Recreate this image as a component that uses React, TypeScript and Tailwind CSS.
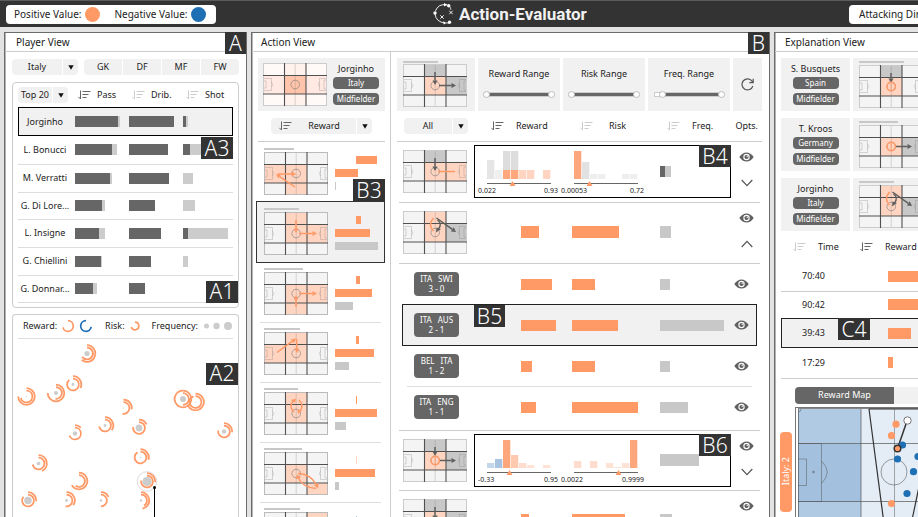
import React from "react";

const ORANGE = "#ff9966";
const PEACH = "#ffd5c2";
const GREY = "#c8c8c8";

type Tone = "o" | "g";

function Badge({ children, className = "" }: { children: string; className?: string }) {
  return (
    <span
      className={`absolute z-10 flex h-[22px] items-center justify-center bg-[#333] text-[21px] leading-none font-light text-white ${className}`}
    >
      {children}
    </span>
  );
}

function SortIcon({ active = false }: { active?: boolean }) {
  return (
    <svg width="13" height="10" viewBox="0 0 13 10" fill="none" stroke={active ? "#666" : "#ccc"} className="shrink-0">
      <path d="M2.5 0.5V9M0.3 6.8L2.5 9M4.5 1.5H12.5M4.5 4.5H10.5M4.5 7.5H8.5" />
    </svg>
  );
}

function Picker({ label, value, className = "", sort = false }: { label: string; value: string; className?: string; sort?: boolean }) {
  return (
    <div className={`relative flex h-4 rounded bg-[#f1f1f1] ${className}`}>
      {sort && (
        <span className="flex items-center pl-2">
          <SortIcon active />
        </span>
      )}
      <select
        aria-label={label}
        className="min-w-0 flex-1 appearance-none bg-transparent pr-4 text-center text-[9px] leading-4 font-normal text-[#222] [text-align-last:center]"
      >
        <option>{value}</option>
      </select>
      <span className="pointer-events-none absolute inset-y-0 right-0 flex w-4 items-center justify-center border-l border-white">
        <svg width="6" height="5" viewBox="0 0 6 5">
          <path d="M0.3 0.3H5.7L3 4.8Z" fill="#111" />
        </svg>
      </span>
    </div>
  );
}

function SortLabel({ children, active = false, className = "" }: { children: string; active?: boolean; className?: string }) {
  return (
    <button type="button" className={`flex items-center font-normal ${className}`}>
      <SortIcon active={active} />
      <span>{children}</span>
    </button>
  );
}

function Arrow({ x1, y1, x2, y2, tone = "o", head = true }: { x1: number; y1: number; x2: number; y2: number; tone?: Tone; head?: boolean }) {
  const color = tone === "o" ? ORANGE : "#5f5f5f";
  const a = Math.atan2(y2 - y1, x2 - x1);
  const bx = x2 - 4.5 * Math.cos(a);
  const by = y2 - 4.5 * Math.sin(a);
  const px = -Math.sin(a) * 2.5;
  const py = Math.cos(a) * 2.5;
  return (
    <g>
      <line x1={x1} y1={y1} x2={head ? bx : x2} y2={head ? by : y2} stroke={color} strokeWidth="1.5" />
      {head && <polygon points={`${x2},${y2} ${bx + px},${by + py} ${bx - px},${by - py}`} fill={color} />}
    </g>
  );
}

/* A football pitch split into nine zones; `zones` maps a zone index (0-8) to its fill. */
function Pitch({ zones, framed = false, children }: { zones: Record<number, string>; framed?: boolean; children?: React.ReactNode }) {
  const xs = [0, 21.5, 43, 64];
  const ys = [0, 12.5, 31, 43];
  return (
    <svg width="64" height="43" viewBox="0 0 64 43" fill="none" className="shrink-0">
      <rect width="64" height="43" fill="#f4f4f4" />
      {Object.entries(zones).map(([k, fill]) => {
        const i = Number(k);
        const c = i % 3;
        const r = Math.floor(i / 3);
        return <rect key={k} x={xs[c]} y={ys[r]} width={xs[c + 1] - xs[c]} height={ys[r + 1] - ys[r]} fill={fill} />;
      })}
      <g stroke="#777" strokeOpacity="0.35" strokeWidth="0.8">
        <path d="M32.2 0V43" />
        <path d="M0 15.5H8.5V27.5H0M0 18H3V25H0M8.5 19Q11 21.5 8.5 24" />
        <path d="M64 15.5H56.5V27.5H64M64 17H61V26H64M56.5 19Q54 21.5 56.5 24" />
      </g>
      <circle cx="32.2" cy="21.5" r="4.3" stroke="#777" strokeOpacity="0.75" strokeWidth="0.8" />
      <rect x="0.5" y="0.5" width="63" height="42" stroke={framed ? "#bbb" : "#ccc"} />
      <path d="M21.5 0V43M43 0V43M0 12.5H64M0 31H64" stroke="#505050" strokeWidth="1.1" />
      {children}
    </svg>
  );
}

function Caption({ w }: { w: number }) {
  return <div className="h-[2px] bg-[#c8c8c8]" style={{ width: w }} />;
}

function Pill({ children }: { children: string }) {
  return (
    <span className="block h-3 w-[46px] rounded bg-[#666] text-center text-[8px] leading-3 text-white">{children}</span>
  );
}

function PersonTag({ name, team }: { name: string; team: string }) {
  return (
    <div className="flex flex-col items-center">
      <span className="h-4 text-[9px] leading-4 whitespace-nowrap text-[#222]">{name}</span>
      <div className="flex flex-col gap-1">
        <Pill>{team}</Pill>
        <Pill>Midfielder</Pill>
      </div>
    </div>
  );
}

function EyeButton() {
  return (
    <button type="button" aria-label="Show" className="block">
      <svg width="15" height="10" viewBox="0 0 15 10">
        <path d="M0.3 5Q3.4 0.5 7.5 0.5T14.7 5Q11.6 9.5 7.5 9.5T0.3 5Z" fill="#606060" />
        <circle cx="7.5" cy="5" r="3.2" fill="#fff" />
        <circle cx="7.5" cy="5" r="2.1" fill="#606060" />
        <circle cx="8.2" cy="4.3" r="0.7" fill="#fff" />
      </svg>
    </button>
  );
}

function ChevronButton({ up = false }: { up?: boolean }) {
  return (
    <button type="button" aria-label={up ? "Collapse" : "Expand"} className="block">
      <svg width="12" height="8" viewBox="0 0 12 8" fill="none" stroke="#555" strokeWidth="1.2">
        <path d={up ? "M0.7 7L6 1.4L11.3 7" : "M0.7 1L6 6.6L11.3 1"} />
      </svg>
    </button>
  );
}

/* ------------------------------ Player view ------------------------------ */

const players: { name: string; pass: number[]; drib: number[]; shot: number[] }[] = [
  { name: "Jorginho", pass: [43, 2], drib: [45, 0], shot: [3, 2] },
  { name: "L. Bonucci", pass: [37, 5], drib: [39, 0], shot: [7, 13] },
  { name: "M. Verratti", pass: [35, 2], drib: [40, 0], shot: [0, 10] },
  { name: "G. Di Lore...", pass: [27, 3], drib: [26, 0], shot: [0, 12] },
  { name: "L. Insigne", pass: [24, 6], drib: [32, 0], shot: [5, 40] },
  { name: "G. Chiellini", pass: [26, 1], drib: [22, 0], shot: [0, 5] },
  { name: "G. Donnar...", pass: [18, 4], drib: [16, 0], shot: [0, 0] },
];

function SplitBar({ v }: { v: number[] }) {
  return (
    <div className="flex h-[11px]">
      <div className="bg-[#666]" style={{ width: v[0] }} />
      <div className="bg-[#ccc]" style={{ width: v[1] }} />
    </div>
  );
}

function arc(cx: number, cy: number, r: number, from: number, to: number) {
  const p = (d: number) => {
    const t = ((d - 90) * Math.PI) / 180;
    return `${(cx + r * Math.cos(t)).toFixed(2)} ${(cy + r * Math.sin(t)).toFixed(2)}`;
  };
  return `M${p(from)}A${r} ${r} 0 ${to - from > 180 ? 1 : 0} 1 ${p(to)}`;
}

/* x, y, frequency radius, reward sweep, risk sweep */
const glyphs: number[][] = [
  [87, 353.5, 2.6, 220, 235],
  [26.5, 396.5, 0.6, 270, 255],
  [56, 393, 2, 270, 185],
  [73, 384.5, 1.4, 115, 320],
  [123.5, 408, 0.6, 100, 190],
  [105, 425.5, 1.4, 125, 260],
  [139, 428, 3.4, 65, 280],
  [75, 433.5, 2.2, 45, 250],
  [183, 399, 3, 359, 180],
  [195.5, 402, 0.6, 240, 340],
  [224, 431.5, 2.2, 95, 280],
  [38.5, 463.5, 1.8, 155, 260],
  [140.5, 457.5, 0.7, 105, 330],
  [79, 481, 0.4, 240, 215],
  [147, 481.5, 4.6, 95, 280],
  [28, 500.5, 3.8, 95, 310],
  [66.5, 500.5, 1.4, 125, 190],
  [101, 500.5, 1.2, 65, 180],
  [141, 500.5, 1.2, 170, 150],
];

function PlayerView() {
  return (
    <section className="relative flex w-[243px] shrink-0 flex-col border border-b-0 border-[#6b6b6b] bg-white shadow-[inset_1px_0_0_#b5b5b5]">
      <Badge className="-top-px right-0 w-[21px]">A</Badge>
      <h2 className="h-[19px] shrink-0 border-b border-[#ccc] pl-[11px] text-[10px] leading-[19px]">Player View</h2>
      <div className="flex flex-1 flex-col px-[7px] pt-[7px]">
        <div className="flex gap-[6px]">
          <Picker label="Team" value="Italy" className="w-[66px]" />
          <div className="grid h-4 flex-1 grid-cols-4 gap-px overflow-hidden rounded">
            {["GK", "DF", "MF", "FW"].map((p) => (
              <button key={p} type="button" className="bg-[#f1f1f1] text-[9px] leading-4">
                {p}
              </button>
            ))}
          </div>
        </div>

        <div className="relative mt-[7px] rounded border border-[#ccc] px-[5px] pt-1 pb-1">
          <Badge className="top-[54px] right-[5px] w-8">A3</Badge>
          <Badge className="right-0 bottom-[4px] w-8">A1</Badge>
          <table className="w-full table-fixed border-collapse text-[9px] leading-4">
            <colgroup>
              <col className="w-[57px]" />
              <col className="w-[54px]" />
              <col className="w-[54px]" />
              <col />
            </colgroup>
            <thead>
              <tr className="h-5 align-top">
                <th className="p-0">
                  <Picker label="Number of players" value="Top 20" className="w-[50px]" />
                </th>
                <th className="p-0 pl-[3px]">
                  <SortLabel active className="gap-[6px]">Pass</SortLabel>
                </th>
                <th className="p-0 pl-[3px]">
                  <SortLabel className="gap-[6px]">Drib.</SortLabel>
                </th>
                <th className="p-0 pl-[3px]">
                  <SortLabel className="gap-[6px]">Shot</SortLabel>
                </th>
              </tr>
            </thead>
            <tbody>
              {players.map((p, i) => (
                <tr
                  key={p.name}
                  className={
                    i === 0
                      ? "h-[29px] bg-[#f1f1f1] outline outline-1 -outline-offset-1 outline-black"
                      : i % 3 === 0
                        ? "h-[27px] border-b border-[#ddd]"
                        : "h-[28px] border-b border-[#ddd]"
                  }
                >
                  <td className="p-0 pr-[3px] text-center text-[9px] whitespace-nowrap">{p.name}</td>
                  <td className="p-0">
                    <SplitBar v={p.pass} />
                  </td>
                  <td className="p-0">
                    <SplitBar v={p.drib} />
                  </td>
                  <td className="p-0">
                    <SplitBar v={p.shot} />
                  </td>
                </tr>
              ))}
            </tbody>
          </table>
        </div>

        <div className="relative mt-[6px] flex-1 rounded-t border border-b-0 border-[#ccc] px-[5px]">
          <Badge className="top-[48px] right-0 w-8">A2</Badge>
          <div className="flex h-6 items-center border-b border-[#ddd] pl-[5px] text-[9px]">
            <span>Reward:</span>
            <svg width="32" height="14" viewBox="0 0 32 14" fill="none" strokeWidth="1.7" className="ml-[4px] shrink-0">
              <path d={arc(7, 7, 5.3, 0, 255)} stroke={ORANGE} />
              <path d={arc(25, 7, 5.3, 100, 360)} stroke="#1f6fb5" />
            </svg>
            <span className="ml-3">Risk:</span>
            <svg width="10" height="12" viewBox="0 0 10 12" fill="none" strokeWidth="1.7" className="ml-[5px] shrink-0">
              <path d={arc(5, 6, 3.8, 0, 255)} stroke={ORANGE} />
            </svg>
            <span className="ml-3">Frequency:</span>
            <svg width="30" height="10" viewBox="0 0 30 10" fill="#ccc" className="ml-[5px] shrink-0">
              <circle cx="3.5" cy="5" r="2.5" />
              <circle cx="13.5" cy="5" r="3.2" />
              <circle cx="25" cy="5" r="4" />
            </svg>
          </div>
          <svg height="178" className="w-full overflow-visible" fill="none">
            <g transform="translate(-18 -339)" stroke={ORANGE} strokeWidth="1.8">
              <circle cx="147" cy="481.5" r="9.8" stroke="#ddd" strokeWidth="1" />
              {glyphs.map(([x, y, f, rew, risk], i) => (
                <g key={i}>
                  <circle cx={x} cy={y} r={f} fill="#ccc" stroke="none" />
                  <path d={arc(x, y, 8.3, 0, rew)} />
                  <path d={arc(x, y, 5.9, 0, risk)} />
                </g>
              ))}
              <circle cx="154.5" cy="487.5" r="1.5" fill="#000" stroke="none" />
              <path d="M154.5 487.5V520" stroke="#000" strokeWidth="1" />
            </g>
          </svg>
        </div>
      </div>
    </section>
  );
}

/* ------------------------------ Action view ------------------------------ */

const actions: {
  cap: number;
  zones: Record<number, string>;
  art: React.ReactNode;
  reward: number;
  tone: string;
  risk: number;
  freq: number;
}[] = [
  {
    cap: 30,
    zones: { 3: PEACH, 4: PEACH, 7: PEACH },
    art: (
      <>
        <Arrow x1={14} y1={22} x2={32} y2={22} />
        <Arrow x1={31} y1={35} x2={12} y2={22} />
      </>
    ),
    reward: 21,
    tone: ORANGE,
    risk: 23,
    freq: 1,
  },
  {
    cap: 35,
    zones: { 1: PEACH, 4: PEACH, 5: PEACH },
    art: (
      <>
        <Arrow x1={32} y1={8} x2={32} y2={21} />
        <Arrow x1={35} y1={21.5} x2={53} y2={21.5} />
      </>
    ),
    reward: 5,
    tone: ORANGE,
    risk: 35,
    freq: 43,
  },
  {
    cap: 39,
    zones: { 4: PEACH, 5: PEACH, 7: PEACH },
    art: (
      <>
        <Arrow x1={32} y1={35} x2={32} y2={23} />
        <Arrow x1={35} y1={21.5} x2={53} y2={21.5} />
      </>
    ),
    reward: 4,
    tone: ORANGE,
    risk: 37,
    freq: 18,
  },
  {
    cap: 36,
    zones: { 1: PEACH, 3: PEACH, 4: PEACH },
    art: (
      <>
        <Arrow x1={13} y1={20.5} x2={32} y2={6.5} />
        <Arrow x1={32.5} y1={7} x2={33} y2={21} />
      </>
    ),
    reward: 3,
    tone: ORANGE,
    risk: 39,
    freq: 14,
  },
  {
    cap: 34,
    zones: { 1: PEACH, 4: PEACH },
    art: (
      <>
        <g stroke={ORANGE} strokeWidth="1.4">
          <path d="M30 20Q24.5 15 29 9M35 8Q40.500 13 36 19" />
        </g>
        <path d="M27 8L32 6.500L31 11Z M33.500 17.500L38 18.500L34 22Z" fill={ORANGE} />
      </>
    ),
    reward: 1,
    tone: ORANGE,
    risk: 42,
    freq: 11,
  },
  {
    cap: 38,
    zones: { 4: PEACH, 8: PEACH },
    art: (
      <>
        <g stroke={ORANGE} strokeWidth="1.4">
          <path d="M34 21.500Q46 22 52 32M52 36.500Q38 35 34.500 26" />
        </g>
        <path d="M50 33L54.500 31L54 36.500Z M32 27L33 22.500L37 26Z" fill={ORANGE} />
      </>
    ),
    reward: 1,
    tone: "#ffd5c2",
    risk: 40,
    freq: 4,
  },
  { cap: 36, zones: { 2: PEACH }, art: null, reward: 1, tone: "#a9c4e0", risk: 40, freq: 4 },
];

function ActionList() {
  return (
    <div className="relative w-[139px] shrink-0 border-r border-[#ccc] pt-[6px] pr-[5px] pl-[6px]">
      <Badge className="top-[127px] right-[5px] w-8">B3</Badge>
      <div className="flex h-[53px] justify-between bg-[#f1f1f1] pr-[6px] pl-[5px]">
        <div className="pt-[5px]">
          <Pitch
            zones={{
              0: "#fffaf8",
              1: "#fff1ec",
              2: "#fffaf8",
              3: "#ffe9e2",
              4: "#ffc4a9",
              5: "#ffe9e2",
              6: "#fffaf8",
              7: "#fff1ec",
              8: "#fffaf8",
            }}
          />
        </div>
        <div className="pt-[3px]">
          <PersonTag name="Jorginho" team="Italy" />
        </div>
      </div>
      <div className="mt-[7px] border-b border-[#ccc] px-[13px] pb-[7px]">
        <Picker label="Sort actions by" value="Reward" sort />
      </div>
      <ul className="mt-px mr-1 ml-[2px]">
        {actions.map((a, i) => (
          <li
            key={i}
            className={
              i === 1
                ? "-mx-1 -mt-[2px] flex h-[62px] border border-[#333] bg-[#f1f1f1] pt-[6px] pl-[7px]"
                : "flex h-[60px] border-b border-[#ddd] pt-[5px] pl-1"
            }
          >
            <div className="flex flex-col gap-[2px]">
              <Caption w={a.cap} />
              <Pitch zones={a.zones} framed>
                {a.art}
              </Pitch>
            </div>
            <div className="ml-[7px] flex flex-col gap-[5px] pt-2">
              <div className="ml-[21px] h-2" style={{ width: a.reward, background: a.tone }} />
              <div className="h-2 bg-[#ff9966]" style={{ width: a.risk }} />
              <div className="h-2 bg-[#c8c8c8]" style={{ width: a.freq }} />
            </div>
          </li>
        ))}
      </ul>
    </div>
  );
}

function RangeFilter({ label, low = 0 }: { label: string; low?: number }) {
  const thumb =
    "pointer-events-none absolute inset-0 h-full w-full appearance-none bg-transparent [&::-webkit-slider-thumb]:pointer-events-auto [&::-webkit-slider-thumb]:h-[7px] [&::-webkit-slider-thumb]:w-[7px] [&::-webkit-slider-thumb]:appearance-none [&::-webkit-slider-thumb]:rounded-full [&::-webkit-slider-thumb]:border [&::-webkit-slider-thumb]:border-[#bbb] [&::-webkit-slider-thumb]:bg-white";
  return (
    <div role="group" aria-label={label} className="min-w-0 bg-[#f1f1f1] px-[5px] pt-2">
      <div className="text-center text-[9px] leading-4 whitespace-nowrap">{label}</div>
      <div className="relative mt-[9px] h-[7px]">
        <div className="absolute inset-x-[2px] top-[2px] h-[3px] bg-white outline outline-1 outline-[#ccc]" />
        <div className="absolute top-[2px] right-[3px] h-[3px] bg-[#666]" style={{ left: `${low + 4}%` }} />
        <input type="range" aria-label={`${label} minimum`} defaultValue={low} className={thumb} />
        <input type="range" aria-label={`${label} maximum`} defaultValue={100} className={thumb} />
      </div>
    </div>
  );
}

type Bin = [number, string] | [number, string, number, string];

function Histogram({ bins, inset, mark, low, high, className }: { bins: Bin[]; inset: number; mark: number; low: string; high: string; className: string }) {
  return (
    <div className={`shrink-0 ${className}`}>
      <svg width="80" height="40" viewBox="0 0 80 40" className="block">
        {bins.map((b, i) => (
          <g key={i}>
            <rect x={inset + i * 8} y={33 - b[0]} width="7.300" height={b[0]} fill={b[1]} />
            {b.length === 4 && <rect x={inset + i * 8} y={33 - b[0] - b[2]} width="7.300" height={b[2]} fill={b[3]} />}
          </g>
        ))}
        <path d={`M${inset} 37.500H${inset + 64}`} stroke="#666" />
        <path d={`M${mark - 3} 40L${mark} 35L${mark + 3} 40Z`} fill={ORANGE} />
      </svg>
      <div className="flex justify-between text-[7px] leading-[9px]">
        <span>{low}</span>
        <span>{high}</span>
      </div>
    </div>
  );
}

function Bars({ v }: { v: number[] }) {
  return (
    <>
      <div className="h-full bg-[#ff9966]" style={{ width: v[0] }} />
      <div className="h-full bg-[#ff9966]" style={{ width: v[1] }} />
      <div className="h-full bg-[#c8c8c8]" style={{ width: v[2] }} />
    </>
  );
}

function PatternRow({ zones, art, up = false, className = "", children }: { zones: Record<number, string>; art: React.ReactNode; up?: boolean; className?: string; children: React.ReactNode }) {
  return (
    <div className={`mx-[2px] flex border-b border-[#ccc] pl-1 ${className}`}>
      <div className="pt-2">
        <Pitch zones={zones}>{art}</Pitch>
      </div>
      <div className="ml-[7px] min-w-0 flex-1">{children}</div>
      <div className="ml-[2px] flex w-[27px] flex-col items-center gap-[17px] pt-[10px]">
        <EyeButton />
        <ChevronButton up={up} />
      </div>
    </div>
  );
}

function GameRow({ teams, score, v, active = false }: { teams: [string, string]; score: string; v: number[]; active?: boolean }) {
  return (
    <div
      className={
        active
          ? "mx-[5px] flex h-[42px] items-center border border-[#222] bg-[#f1f1f1] pr-[7px] pl-[11px]"
          : "mx-[5px] flex h-10 items-center pr-2 pl-3"
      }
    >
      <div className="w-[45px] rounded bg-[#666] py-[2px] text-center text-[8px] leading-[10px] text-white">
        <div className="flex justify-center gap-[6px]">
          <span>{teams[0]}</span>
          <span>{teams[1]}</span>
        </div>
        <div>{score}</div>
      </div>
      <div className="ml-[62px] grid h-[11px] flex-1 grid-cols-[51px_88px_1fr]">
        <Bars v={v} />
      </div>
      <EyeButton />
    </div>
  );
}

const filterArt = (
  <>
    <Arrow x1={32} y1={8} x2={32} y2={21} tone="g" />
    <Arrow x1={36} y1={21.5} x2={53} y2={21.5} tone="g" />
  </>
);

const loopArt = (
  <>
    <path d="M30.500 20Q24.500 14 30.500 7" stroke={ORANGE} strokeWidth="1.5" />
    <path d="M34.500 9Q39.500 13 35.500 18" stroke="#5f5f5f" strokeWidth="1.4" />
    <path d="M33.500 16.500L38 18L33 21.500Z" fill="#5f5f5f" />
    <Arrow x1={33.5} y1={7} x2={53} y2={21} tone="g" />
  </>
);

const spinArt = (
  <>
    <circle cx="32.200" cy="21.500" r="4.200" stroke={ORANGE} strokeWidth="1.400" />
    <path d="M32.200 18V25" stroke={ORANGE} strokeWidth="0.800" />
  </>
);

function ActionDetail() {
  return (
    <div className="min-w-0 flex-1 pt-[6px] pr-[7px] pl-[6px]">
      <div className="grid h-[53px] grid-cols-[78px_1fr_1fr_1fr_29px] gap-[3px]">
        <div className="flex flex-col gap-px bg-[#f1f1f1] pt-[3px] pl-[6px]">
          <Caption w={35} />
          <Pitch zones={{ 1: GREY, 4: PEACH, 5: GREY }}>{filterArt}</Pitch>
        </div>
        <RangeFilter label="Reward Range" />
        <RangeFilter label="Risk Range" />
        <RangeFilter label="Freq. Range" low={9} />
        <button type="button" aria-label="Reset" className="flex items-center justify-center bg-[#f1f1f1]">
          <svg width="13" height="13" viewBox="0 0 13 13" fill="none" stroke="#555" strokeWidth="1.2">
            <path d="M11.800 8A5.500 5.500 0 1 1 11 3.200L12 4.500M12.200 0.800V4.700H8.300" />
          </svg>
        </button>
      </div>

      <div className="mt-[7px] grid h-6 grid-cols-[87px_89px_87px_1fr_auto] items-start border-b border-[#ccc] pr-1 pl-[7px] text-[9px] leading-4">
        <Picker label="Games" value="All" className="w-16" />
        <SortLabel active className="gap-3">Reward</SortLabel>
        <SortLabel className="gap-4">Risk</SortLabel>
        <SortLabel className="gap-3">Freq.</SortLabel>
        <span>Opts.</span>
      </div>

      <PatternRow
        className="h-[61px]"
        zones={{ 1: GREY, 4: PEACH, 5: PEACH }}
        art={
          <>
            <Arrow x1={32} y1={8} x2={32} y2={21} tone="g" />
            <Arrow x1={35} y1={21.5} x2={52} y2={21.5} head={false} />
          </>
        }
      >
        <div className="relative mt-[3px] flex h-[53px] border border-black pl-[3px]">
          <Badge className="-top-px -right-px w-8">B4</Badge>
          <div className="w-[83px]">
            <Histogram
              className="w-[80px]"
              inset={9}
              mark={34.5}
              low="0.022"
              high="0.93"
              bins={[
                [19, "#e5e5e5"],
                [9, "#efefef"],
                [9, "#ffa77c", 19, "#ddd"],
                [9, "#ffa77c", 19, "#ddd"],
                [9, PEACH],
                [9, PEACH],
                [0, PEACH],
                [9, PEACH],
              ]}
            />
          </div>
          <div className="w-[99px]">
            <Histogram
              className="w-[83px]"
              inset={13}
              mark={28.5}
              low="0.00053"
              high="0.72"
              bins={[
                [28, "#ffa77c"],
                [17, "#e2e2e2"],
                [5, "#eee"],
                [5, "#eee"],
                [0, "#eee"],
                [0, "#eee"],
                [5, "#eee"],
                [5, "#eee"],
              ]}
            />
          </div>
          <div className="mt-5 flex h-[11px]">
            <div className="w-[5px] bg-[#666]" />
            <div className="w-[6px] bg-[#c8c8c8]" />
          </div>
        </div>
      </PatternRow>

      <PatternRow className="h-[61px]" up zones={{ 1: PEACH, 4: PEACH, 5: GREY }} art={loopArt}>
        <div className="mt-[23px] grid h-3 grid-cols-[51px_88px_1fr] pl-[47px]">
          <Bars v={[18, 47, 11]} />
        </div>
      </PatternRow>

      <GameRow teams={["ITA", "SWI"]} score="3 - 0" v={[31, 23, 10]} />
      <div className="relative">
        <Badge className="top-px left-[77px] w-[31px]">B5</Badge>
        <GameRow active teams={["ITA", "AUS"]} score="2 - 1" v={[35, 46, 64]} />
      </div>
      <GameRow teams={["BEL", "ITA"]} score="1 - 2" v={[11, 23, 10]} />
      <div className="mx-[10px] h-px bg-[#ddd]" />
      <GameRow teams={["ITA", "ENG"]} score="1 - 1" v={[15, 66, 28]} />
      <div className="mx-[2px] h-1 border-b border-[#ccc]" />

      <PatternRow
        className="h-[60px]"
        zones={{ 1: GREY, 4: PEACH, 5: GREY }}
        art={
          <>
            <Arrow x1={32} y1={8} x2={32} y2={17} tone="g" />
            {spinArt}
            <Arrow x1={37} y1={21.5} x2={53} y2={21.5} tone="g" />
          </>
        }
      >
        <div className="relative mt-[3px] flex h-[53px] border border-black pl-[3px]">
          <Badge className="-top-px -right-px w-8">B6</Badge>
          <div className="w-[83px]">
            <Histogram
              className="w-[80px]"
              inset={9}
              mark={31.5}
              low="-0.33"
              high="0.95"
              bins={[
                [5, "#c3d6ea"],
                [9, "#a9c4e0"],
                [28, "#ffa77c"],
                [13, "#ffc9b0"],
                [5, "#ffdccd"],
                [3, "#ffe2d6"],
                [0, PEACH],
                [3, "#ffe2d6"],
              ]}
            />
          </div>
          <div className="w-[99px]">
            <Histogram
              className="w-[83px]"
              inset={13}
              mark={57.5}
              low="0.0022"
              high="0.9999"
              bins={[
                [7, "#ffdccd"],
                [0, PEACH],
                [7, "#ffdccd"],
                [0, PEACH],
                [5, "#ffe2d6"],
                [1, "#ffe2d6"],
                [5, "#ffe2d6"],
                [28, "#ffa77c"],
              ]}
            />
          </div>
          <div className="mt-[19px] h-3 w-[39px] bg-[#c8c8c8]" />
        </div>
      </PatternRow>

      <PatternRow className="h-[61px]" zones={{ 1: GREY, 4: PEACH, 5: GREY }} art={filterArt}>
        <div className="mt-[23px] grid h-3 grid-cols-[51px_88px_1fr] pl-[47px]">
          <Bars v={[8, 53, 12]} />
        </div>
      </PatternRow>
    </div>
  );
}

function ActionView() {
  return (
    <section className="relative flex min-w-0 flex-1 flex-col border border-b-0 border-[#6b6b6b] bg-white shadow-[inset_1px_0_0_#b5b5b5]">
      <Badge className="-top-px right-0 w-[21px]">B</Badge>
      <h2 className="h-[19px] shrink-0 border-b border-[#ccc] pl-[9px] text-[10px] leading-[19px]">Action View</h2>
      <div className="flex flex-1">
        <ActionList />
        <ActionDetail />
      </div>
    </section>
  );
}

/* ---------------------------- Explanation view --------------------------- */

const explained: { name: string; team: string; cap: number; zones: Record<number, string>; art: React.ReactNode }[] = [
  {
    name: "S. Busquets",
    team: "Spain",
    cap: 45,
    zones: { 1: GREY, 4: PEACH },
    art: (
      <>
        <Arrow x1={32} y1={8} x2={32} y2={18} tone="g" />
        {spinArt}
      </>
    ),
  },
  {
    name: "T. Kroos",
    team: "Germany",
    cap: 39,
    zones: { 4: PEACH, 5: GREY },
    art: (
      <>
        {spinArt}
        <Arrow x1={37} y1={21.5} x2={53} y2={21.5} tone="g" />
      </>
    ),
  },
  { name: "Jorginho", team: "Italy", cap: 35, zones: { 1: PEACH, 4: PEACH, 5: GREY }, art: loopArt },
];

const moments: [string, number][] = [
  ["70:40", 40],
  ["90:42", 40],
  ["39:43", 23],
  ["17:29", 5],
];

function RewardMap() {
  return (
    <svg width="180" height="180" viewBox="795 407 180 180" fill="none" className="shrink-0">
      <rect x="795.5" y="407.5" width="179" height="170" stroke="#777" fill="#fff" />
      <rect x="798" y="409" width="63" height="35" fill="#b0cae3" />
      <rect x="798" y="444" width="63" height="58" fill="#a3c1de" />
      <rect x="798" y="502" width="63" height="80" fill="#b0cae3" />
      <rect x="861" y="409" width="110" height="170" fill="#e4edf5" />
      <g stroke="#555" strokeOpacity="0.7">
        <path d="M798 408.500H975M798.500 409V580M861 409V580M798 443.500H975M798 501.500H975" />
        <path strokeWidth="0.700" d="M894.500 409V580M798 443.500H821.500V501.500H798M798 459H806.500V485.500H798M821.500 461Q833 472 821.500 483.500M798 412Q801 412 801 409" />
        <circle cx="894" cy="472" r="13" strokeWidth="0.800" />
        <circle cx="813.500" cy="472" r="0.800" />
      </g>
      <path d="M869 409L883.500 520M869 409H975M920 482L912 520" stroke="#333" strokeWidth="1.200" />
      <path d="M897.500 448.500L906 424" stroke="#333" strokeWidth="1.500" />
      <g fill="#1f6fb5">
        <circle cx="902.500" cy="445" r="3.600" />
        <circle cx="897.500" cy="459" r="3.600" />
        <circle cx="918" cy="456.500" r="3.600" />
        <circle cx="913.500" cy="471.700" r="3.600" />
        <circle cx="907" cy="493.500" r="3.600" />
      </g>
      <g fill={ORANGE}>
        <circle cx="896" cy="424.200" r="3.600" />
        <circle cx="891.500" cy="435.700" r="3.600" />
        <circle cx="897.500" cy="448.500" r="3.300" stroke="#333" strokeWidth="1.500" />
        <circle cx="891.500" cy="503.500" r="3.600" />
      </g>
      <circle cx="907.500" cy="420.500" r="3.700" fill="#fff" stroke="#777" />
    </svg>
  );
}

function ExplanationView() {
  return (
    <section className="relative flex w-[144px] shrink-0 flex-col overflow-hidden border border-r-0 border-b-0 border-[#6b6b6b] bg-white shadow-[inset_1px_0_0_#b5b5b5]">
      <h2 className="h-[19px] shrink-0 border-b border-[#ccc] pl-[10px] text-[10px] leading-[19px]">Explanation View</h2>
      <div className="flex flex-col gap-[7px] pt-[6px] pl-[6px]">
        {explained.map((e) => (
          <div key={e.name} className="flex h-[53px] gap-[3px]">
            <div className="w-[69px] shrink-0 bg-[#f1f1f1] pt-[3px]">
              <PersonTag name={e.name} team={e.team} />
            </div>
            <div className="flex w-24 shrink-0 flex-col gap-[2px] bg-[#f1f1f1] pt-[3px] pl-[6px]">
              <Caption w={e.cap} />
              <Pitch zones={e.zones}>{e.art}</Pitch>
            </div>
          </div>
        ))}
      </div>

      <div className="relative ml-[6px]">
        <Badge className="top-[87px] left-[57px] w-8">C4</Badge>
        <table className="w-[180px] table-fixed border-collapse text-[9px] leading-4">
          <colgroup>
            <col className="w-[76px]" />
            <col />
          </colgroup>
          <thead>
            <tr className="h-[31px]">
              <th className="p-0 pl-3">
                <SortLabel className="gap-3">Time</SortLabel>
              </th>
              <th className="p-0 pl-[3px]">
                <SortLabel active className="gap-3">Reward</SortLabel>
              </th>
            </tr>
          </thead>
          <tbody>
            {moments.map(([time, w], i) => (
              <tr
                key={time}
                className={
                  i === 2
                    ? "h-[30px] bg-[#f1f1f1] outline outline-1 -outline-offset-1 outline-[#222]"
                    : i === 1
                      ? "h-[27px]"
                      : i === 3
                        ? "h-[30px] border-b border-[#ccc]"
                        : "h-[29px] border-b border-[#ccc]"
                }
              >
                <td className="p-0 pl-[21px] text-[9px]">{time}</td>
                <td className="p-0 pl-[31px]">
                  <div className="h-[11px] bg-[#ff9966]" style={{ width: w }} />
                </td>
              </tr>
            ))}
          </tbody>
        </table>
      </div>

      <div className="mt-2 ml-[5px] flex gap-[3px]">
        <div className="mt-[45px] flex h-20 w-3 shrink-0 items-center justify-center rounded bg-[#ff9966] text-[9px] text-white">
          <span className="rotate-180 leading-3 [writing-mode:vertical-rl]">Italy: 2</span>
        </div>
        <div className="flex flex-col gap-[3px]">
          <div className="flex h-[17px] w-[180px] overflow-hidden rounded text-[9px]">
            <button type="button" className="w-[99px] bg-[#666] text-white">
              Reward Map
            </button>
            <button type="button" aria-label="Risk map" className="flex-1 bg-[#f1f1f1]" />
          </div>
          <RewardMap />
        </div>
      </div>
    </section>
  );
}

/* --------------------------------- Page ---------------------------------- */

function Logo() {
  return (
    <svg width="21" height="22" viewBox="0 0 21 22" fill="none" stroke="#fff" className="shrink-0">
      <path d="M14 1.800Q5 0.500 2.500 8M2 11Q3 19 12 20" strokeWidth="0.900" />
      <path d="M17 3.500L18 7M13 20H16" strokeWidth="0.700" />
      <path d="M7.300 12.300L10.700 15.700M10.700 12.300L7.300 15.700M16.300 7.800L19.700 11.200M19.700 7.800L16.300 11.200" strokeWidth="0.900" />
      <g fill="#fff" stroke="none">
        <circle cx="15.700" cy="2.800" r="1.700" />
        <circle cx="2" cy="10" r="1.700" />
        <circle cx="16.500" cy="19.200" r="1.700" />
        <path d="M11 0L14.500 1.800L11 3.500Z M10.500 18.200L13.500 20L10.500 21.500Z" />
      </g>
    </svg>
  );
}

export default function App() {
  return (
    <div className="flex h-screen w-full flex-col overflow-hidden bg-[#e3e3e3] font-['Noto_Sans','Open_Sans',sans-serif] text-[#222]">
      <header className="grid h-[27px] shrink-0 grid-cols-[1fr_152px_333px] items-center border-t border-[#5c5c5c] bg-[#333]">
        <div className="ml-[6px] flex h-[19px] w-[210px] items-center rounded bg-white pl-2 text-[10px]">
          <span>Positive Value:</span>
          <span className="ml-1 h-[15px] w-[15px] rounded-full bg-[#ff9966]" />
          <span className="ml-[14px]">Negative Value:</span>
          <span className="ml-1 h-[15px] w-[15px] rounded-full bg-[#1f6fb5]" />
        </div>
        <h1 className="flex items-center gap-[5px] font-['Roboto',sans-serif] text-[17px] leading-none font-bold whitespace-nowrap text-[#f1f1f1]">
          <Logo />
          Action-Evaluator
        </h1>
        <div className="flex h-[19px] w-[69px] items-center justify-self-end overflow-hidden rounded-l bg-white pl-[10px] text-[10px] whitespace-nowrap">
          Attacking Direction
        </div>
      </header>
      <main className="flex min-h-0 flex-1 gap-1 pt-[5px] pl-1">
        <PlayerView />
        <ActionView />
        <ExplanationView />
      </main>
    </div>
  );
}
